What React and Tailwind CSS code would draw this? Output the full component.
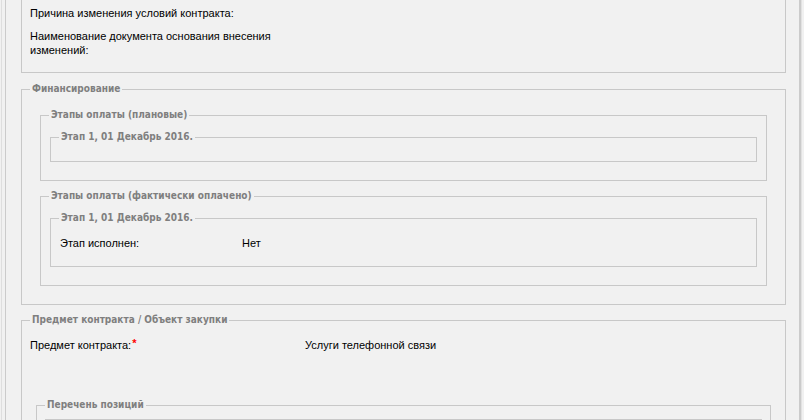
import React from 'react';

const font = "font-['Liberation_Sans',Arial,sans-serif]";

const Legend = ({ children }) => (
    <legend className="px-[2px] text-[10px] leading-[14px] font-bold text-[#7f7f7f] font-['DejaVu_Sans_Condensed','DejaVu_Sans',sans-serif]">
        {children}
    </legend>
);

const Row = ({ label, value, labelWidth = 'w-[275px]', required = false, className = '' }) => (
    <div className={`flex text-[11px] leading-[14px] text-black ${className}`}>
        <div className={`${labelWidth} shrink-0`}>
            {label}
            {required && <span className="ml-[1px] text-[#ff0000] font-bold relative -top-[2px]">*</span>}
        </div>
        <div>{value}</div>
    </div>
);

const Stage = ({ title, children, pb = 'pb-[16px]' }) => (
    <fieldset className={`border border-[#c8c8c8] ml-[1px] w-[707px] px-[8px] ${pb}`}>
        <Legend>{title}</Legend>
        {children}
    </fieldset>
);

const App = () => {
    return (
        <div className={`w-[804px] h-[420px] overflow-hidden bg-[#f1f1f1] ${font}`}>
            <div className="flex h-full">
                <div className="ml-[1px] w-[1px] h-full bg-[#dedede]" />
                <div className="ml-[3px] w-[1px] h-full bg-[#cbcbcb]" />
                <div className="w-[15px]" />

                <div className="w-[765px] shrink-0">
                    {/* top block, its head is scrolled away */}
                    <div className="border-x border-b border-[#c8c8c8] px-[8px] pt-[6px] pb-[15px]">
                        <Row label="Причина изменения условий контракта:" value="" />
                        <Row
                            className="mt-[9px]"
                            label="Наименование документа основания внесения изменений:"
                            value=""
                        />
                    </div>

                    <fieldset className="mt-[9px] border border-[#c8c8c8] px-[8px] pb-[18px]">
                        <Legend>Финансирование</Legend>

                        <fieldset className="mt-[12px] ml-[10px] w-[727px] border border-[#c8c8c8] px-[8px] pb-[18px]">
                            <Legend>Этапы оплаты (плановые)</Legend>
                            <div className="mt-[8px]">
                                <Stage title="Этап 1, 01 Декабрь 2016." pb="pb-[17px]" />
                            </div>
                        </fieldset>

                        <fieldset className="mt-[8px] ml-[10px] w-[727px] border border-[#c8c8c8] px-[8px] pb-[18px]">
                            <Legend>Этапы оплаты (фактически оплачено)</Legend>
                            <div className="mt-[8px]">
                                <Stage title="Этап 1, 01 Декабрь 2016.">
                                    <Row
                                        className="mt-[11px] pl-[1px]"
                                        labelWidth="w-[182px]"
                                        label="Этап исполнен:"
                                        value="Нет"
                                    />
                                </Stage>
                            </div>
                        </fieldset>
                    </fieldset>

                    <fieldset className="mt-[8px] border border-[#c8c8c8] px-[8px] pb-[20px]">
                        <Legend>Предмет контракта / Объект закупки</Legend>
                        <Row
                            className="mt-[11px]"
                            label="Предмет контракта:"
                            required
                            value="Услуги телефонной связи"
                        />

                        <fieldset className="mt-[46px] ml-[6px] w-[735px] border border-[#c8c8c8] px-[8px] pb-[20px]">
                            <Legend>Перечень позиций</Legend>
                            <div className="mt-[7px] h-[40px] border border-[#c8c8c8]" />
                        </fieldset>
                    </fieldset>
                </div>

                <div className="ml-[13px] w-[2px] h-full bg-[#cbcbcb]" />
                <div className="w-[1px] h-full bg-[#e2e2e2]" />
            </div>
        </div>
    );
};

export default App;
